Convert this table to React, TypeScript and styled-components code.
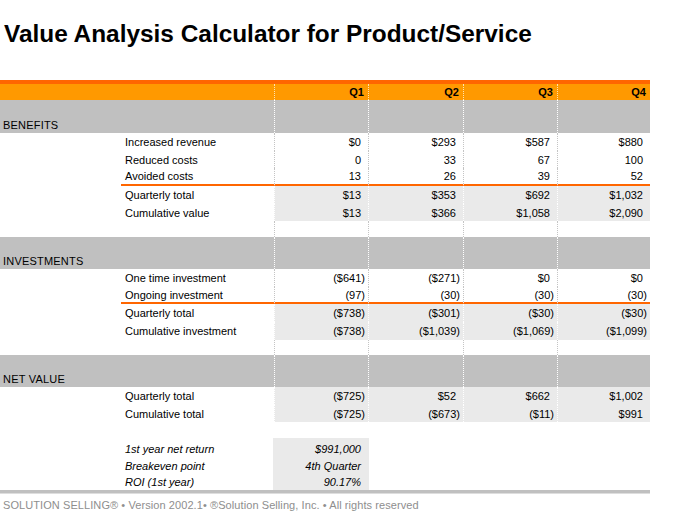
import React from "react";
import styled, { createGlobalStyle, css } from "styled-components";

const GlobalStyle = createGlobalStyle`
  html, body { margin: 0; padding: 0; background: #ffffff; }
  body { font-family: "Liberation Sans", Arial, sans-serif; }
`;

const COLS = "121px 153px 94px 95px 94px 93px";

const Page = styled.div`
  width: 675px;
  height: 520px;
  overflow: hidden;
  display: flex;
  flex-direction: column;
`;

const Title = styled.h1`
  margin: 0;
  height: 80px;
  box-sizing: border-box;
  padding: 20px 0 0 4px;
  font-size: 24.4px;
  line-height: 28px;
  font-weight: bold;
  color: #000;
`;

const Sheet = styled.div`
  width: 650px;
  display: flex;
  flex-direction: column;
  font-size: 11px;
  color: #000;
`;

const Row = styled.div<{ $h: number }>`
  display: grid;
  grid-template-columns: ${COLS};
  height: ${(p) => p.$h}px;
  box-sizing: border-box;
`;

const HeaderRow = styled(Row)`
  background: #ff9900;
  border-top: 4px solid #ff6600;
`;

const SectionRow = styled(Row)`
  background: #c0c0c0;
`;

const HeadCell = styled.div`
  display: flex;
  align-items: center;
  justify-content: flex-end;
  padding-right: 4px;
  font-weight: bold;
  border-left: 1px dotted #ffe2b0;
`;

const SectionLabel = styled.div`
  grid-column: 1 / span 2;
  display: flex;
  align-items: flex-end;
  padding: 0 0 2px 3px;
  letter-spacing: 0.2px;
`;

const Blank = styled.div`
  grid-column: 1 / span 2;
`;

const Gutter = styled.div``;

const Label = styled.div<{ $rule?: boolean }>`
  display: flex;
  align-items: center;
  padding-left: 4px;
  box-sizing: border-box;
  ${(p) =>
    p.$rule &&
    css`
      border-bottom: 2px solid #ff6600;
    `}
`;

const Cell = styled.div<{ $shade?: boolean; $rule?: boolean; $tone?: "white" | "gray" }>`
  display: flex;
  align-items: center;
  justify-content: flex-end;
  padding-right: 3px;
  box-sizing: border-box;
  white-space: nowrap;
  background: ${(p) => (p.$shade ? "#eaeaea" : "transparent")};
  border-left: 1px dotted
    ${(p) => (p.$tone === "gray" || p.$shade ? "#ffffff" : "#c4c4c4")};
  ${(p) =>
    p.$rule &&
    css`
      border-bottom: 2px solid #ff6600;
    `}
`;

const Num = styled.span<{ $neg: boolean }>`
  padding-right: ${(p) => (p.$neg ? 0 : 4)}px;
`;

const Summary = styled.div`
  display: flex;
  flex-direction: column;
  height: 52px;
`;

const SummaryRow = styled(Row)`
  font-style: italic;
`;

const SummaryValue = styled.div<{ $pt: number }>`
  display: flex;
  align-items: center;
  justify-content: flex-end;
  padding: ${(p) => p.$pt}px 8px 0 0;
  margin-left: -1px;
  margin-right: -1px;
  background: #eaeaea;
`;

const SummaryLabel = styled.div<{ $pt: number }>`
  display: flex;
  align-items: center;
  padding: ${(p) => p.$pt}px 0 0 4px;
`;

const BottomBar = styled.div`
  width: 650px;
  height: 4px;
  background: #c0c0c0;
  border-bottom: 1px solid #dedede;
  box-sizing: border-box;
`;

const Footer = styled.div`
  margin-top: 5px;
  padding-left: 3px;
  font-family: "Liberation Sans", Arial, sans-serif;
  font-size: 11px;
  line-height: 13px;
  letter-spacing: 0.08px;
  color: #8e8e8e;
`;

type DataLine = {
  label: string;
  values: string[];
  h: number;
  rule?: boolean;
  shade?: boolean;
};

type Section = {
  title: string;
  h: number;
  rows: DataLine[];
  after: number;
};

const sections: Section[] = [
  {
    title: "BENEFITS",
    h: 33,
    after: 16,
    rows: [
      { label: "Increased revenue", values: ["$0", "$293", "$587", "$880"], h: 18 },
      { label: "Reduced costs", values: ["0", "33", "67", "100"], h: 17 },
      { label: "Avoided costs", values: ["13", "26", "39", "52"], h: 18, rule: true },
      { label: "Quarterly total", values: ["$13", "$353", "$692", "$1,032"], h: 18, shade: true },
      { label: "Cumulative value", values: ["$13", "$366", "$1,058", "$2,090"], h: 17, shade: true },
    ],
  },
  {
    title: "INVESTMENTS",
    h: 32,
    after: 15,
    rows: [
      { label: "One time investment", values: ["($641)", "($271)", "$0", "$0"], h: 18 },
      { label: "Ongoing investment", values: ["(97)", "(30)", "(30)", "(30)"], h: 17, rule: true },
      { label: "Quarterly total", values: ["($738)", "($301)", "($30)", "($30)"], h: 18, shade: true },
      {
        label: "Cumulative investment",
        values: ["($738)", "($1,039)", "($1,069)", "($1,099)"],
        h: 18,
        shade: true,
      },
    ],
  },
  {
    title: "NET VALUE",
    h: 32,
    after: 0,
    rows: [
      { label: "Quarterly total", values: ["($725)", "$52", "$662", "$1,002"], h: 18, shade: true },
      { label: "Cumulative total", values: ["($725)", "($673)", "($11)", "$991"], h: 17, shade: true },
    ],
  },
];

const summary = [
  { label: "1st year net return", value: "$991,000", h: 19, pt: 2 },
  { label: "Breakeven point", value: "4th Quarter", h: 17, pt: 0 },
  { label: "ROI (1st year)", value: "90.17%", h: 16, pt: 0 },
];

const quarters = ["Q1", "Q2", "Q3", "Q4"];

function Value({ text }: { text: string }) {
  return <Num $neg={text.startsWith("(")}>{text}</Num>;
}

export default function App() {
  return (
    <>
      <GlobalStyle />
      <Page>
        <Title>Value Analysis Calculator for Product/Service</Title>
        <Sheet>
          <HeaderRow $h={20}>
            <Blank />
            {quarters.map((q) => (
              <HeadCell key={q}>{q}</HeadCell>
            ))}
          </HeaderRow>
          {sections.map((s) => (
            <React.Fragment key={s.title}>
              <SectionRow $h={s.h}>
                <SectionLabel>{s.title}</SectionLabel>
                {quarters.map((q) => (
                  <Cell key={q} $tone="gray" />
                ))}
              </SectionRow>
              {s.rows.map((r) => (
                <Row $h={r.h} key={s.title + r.label}>
                  <Gutter />
                  <Label $rule={r.rule}>{r.label}</Label>
                  {r.values.map((v, i) => (
                    <Cell key={i} $shade={r.shade} $rule={r.rule}>
                      <Value text={v} />
                    </Cell>
                  ))}
                </Row>
              ))}
              {s.after > 0 && (
                <Row $h={s.after}>
                  <Blank />
                  {quarters.map((q) => (
                    <Cell key={q} />
                  ))}
                </Row>
              )}
            </React.Fragment>
          ))}
          <Row $h={16} />
          <Summary>
            {summary.map((s) => (
              <SummaryRow $h={s.h} key={s.label}>
                <Gutter />
                <SummaryLabel $pt={s.pt}>{s.label}</SummaryLabel>
                <SummaryValue $pt={s.pt}>{s.value}</SummaryValue>
              </SummaryRow>
            ))}
          </Summary>
          <BottomBar />
        </Sheet>
        <Footer>
          SOLUTION SELLING® • Version 2002.1• ®Solution Selling, Inc. • All rights reserved
        </Footer>
      </Page>
    </>
  );
}
